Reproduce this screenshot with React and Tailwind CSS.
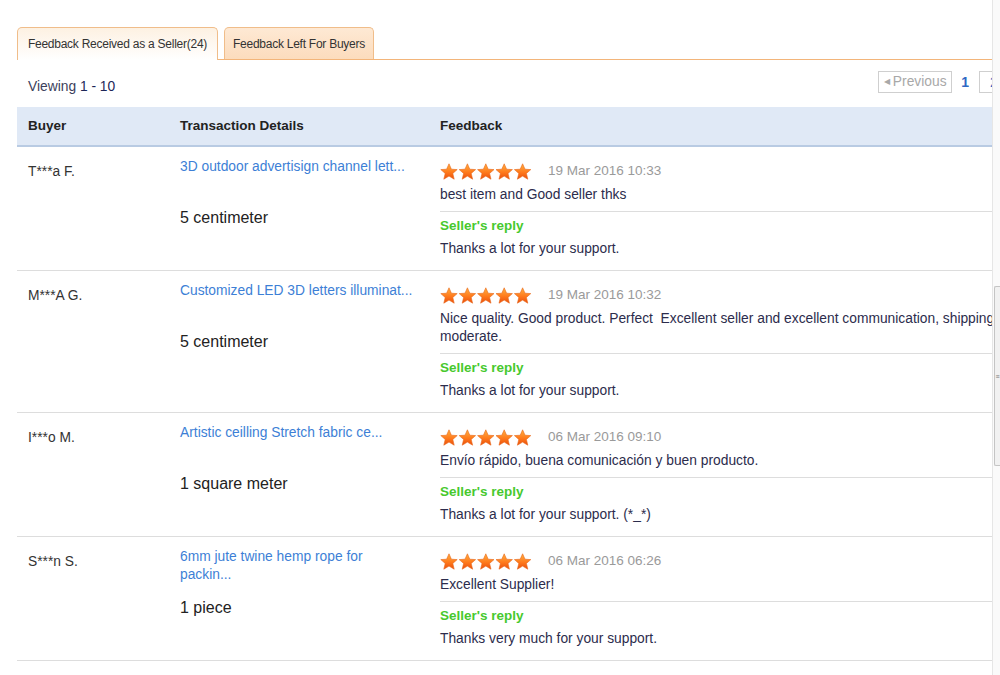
import React from "react";

const rows = [
  {
    buyer: "T***a F.",
    item: ["3D outdoor advertisign channel lett..."],
    qty: "5 centimeter",
    date: "19 Mar 2016 10:33",
    text: ["best item and Good seller thks"],
    reply: "Thanks a lot for your support.",
  },
  {
    buyer: "M***A G.",
    item: ["Customized LED 3D letters illuminat..."],
    qty: "5 centimeter",
    date: "19 Mar 2016 10:32",
    text: [
      "Nice quality. Good product. Perfect\u00a0 Excellent seller and excellent communication, shipping",
      "moderate.",
    ],
    reply: "Thanks a lot for your support.",
  },
  {
    buyer: "I***o M.",
    item: ["Artistic ceilling Stretch fabric ce..."],
    qty: "1 square meter",
    date: "06 Mar 2016 09:10",
    text: ["Envío rápido, buena comunicación y buen producto."],
    reply: "Thanks a lot for your support. (*_*)",
  },
  {
    buyer: "S***n S.",
    item: ["6mm jute twine hemp rope for", "packin..."],
    qty: "1 piece",
    date: "06 Mar 2016 06:26",
    text: ["Excellent Supplier!"],
    reply: "Thanks very much for your support.",
  },
];

function Star({ x }) {
  return (
    <polygon
      transform={`translate(${x},0)`}
      points="9,0.8 11.4,6.2 17.2,6.6 12.8,10.4 14.2,16.2 9,13.1 3.8,16.2 5.2,10.4 0.8,6.6 6.6,6.2"
      fill="url(#starGrad)"
      stroke="#e8661a"
      strokeWidth="0.6"
      strokeLinejoin="round"
    />
  );
}

function Stars() {
  return (
    <svg width="92" height="17" viewBox="0 0 92 17" className="block">
      <defs>
        <linearGradient id="starGrad" x1="0" y1="0" x2="0" y2="1">
          <stop offset="0" stopColor="#ffb040" />
          <stop offset="0.55" stopColor="#ff7a1c" />
          <stop offset="1" stopColor="#ea4f0c" />
        </linearGradient>
      </defs>
      {[0, 18.4, 36.8, 55.2, 73.6].map((x) => (
        <Star key={x} x={x} />
      ))}
    </svg>
  );
}

function FeedbackRow({ row }) {
  return (
    <div className="flex border-b border-[#dddddd]">
      <div className="w-[152px] shrink-0 pl-[11px] pt-[16px] text-[13.8px] leading-[18px] text-[#333]">
        {row.buyer}
      </div>
      <div className="w-[260px] shrink-0 pl-[11px] pt-[11px]">
        <div className="min-h-[36px] text-[13.8px] leading-[18px] text-[#3d7fd6]">
          {row.item.map((l) => (
            <div key={l}>{l}</div>
          ))}
        </div>
        <div className="mt-[14px] text-[16px] leading-[20px] text-[#222]">{row.qty}</div>
      </div>
      <div className="flex-1 pl-[11px] pt-[14px] pb-[12px]">
        <div className="flex h-[20px] items-center">
          <Stars />
          <span className="ml-[16px] text-[13.5px] text-[#9a9a9a]">{row.date}</span>
        </div>
        <div className="mt-[5px] border-b border-[#dddddd] pb-[7px] text-[13.8px] leading-[18px] text-[#2c2c4c]">
          {row.text.map((l) => (
            <div key={l} className="whitespace-nowrap">
              {l}
            </div>
          ))}
        </div>
        <div className="pt-[5px] text-[13.5px] font-bold leading-[18px] text-[#47c92e]">Seller's reply</div>
        <div className="mt-[5px] text-[13.8px] leading-[18px] text-[#2c2c4c]">{row.reply}</div>
      </div>
    </div>
  );
}

export default function App() {
  return (
    <div
      className="flex h-[675px] w-[1000px] overflow-hidden bg-white"
      style={{ fontFamily: '"Liberation Sans", Arial, sans-serif' }}
    >
      <div className="w-[993px] shrink-0 overflow-hidden border-r border-[#e6e6e6] pl-[17px]">
        <div className="w-[1000px]">
          {/* tabs */}
          <div className="flex items-end gap-[6px] border-b border-[#f3b57a] pt-[27px]">
            <div className="-mb-px flex h-[33px] w-[201px] items-center justify-center rounded-t-[5px] border border-b-0 border-[#f0bd8a] bg-gradient-to-b from-[#fdf1e2] to-white text-[12px] tracking-[-0.25px] text-[#333]">
              Feedback Received as a Seller(24)
            </div>
            <div className="flex h-[32px] w-[150px] items-center justify-center rounded-t-[5px] border border-b-0 border-[#f0bd8a] bg-gradient-to-b from-[#fee9d4] to-[#fcdcbd] text-[12px] tracking-[-0.25px] text-[#333]">
              Feedback Left For Buyers
            </div>
          </div>

          {/* viewing + pager */}
          <div className="flex h-[47px] items-start justify-between pr-[8px]">
            <div className="pt-[18px] pl-[11px] text-[13.8px] leading-[18px] text-[#3c3f5c]">
              Viewing <span className="text-[#1d2657]">1 - 10</span>
            </div>
            <div className="flex items-center pt-[11px]">
              <div className="flex h-[22px] w-[74px] items-center justify-center gap-[3px] border border-[#cfcfcf] text-[13.8px] text-[#a8a8a8]">
                <span className="text-[8px]">◀</span>Previous
              </div>
              <span className="ml-[9px] mr-[10px] text-[14px] font-bold text-[#2f68c4]">1</span>
              <div className="flex h-[22px] w-[30px] items-center justify-center border border-[#cfcfcf] text-[14px] text-[#2f68c4]">
                2
              </div>
            </div>
          </div>

          {/* header */}
          <div className="flex h-[40px] items-center border-b-2 border-[#b9cbe3] bg-[#e0e9f6] text-[13.5px] font-bold text-[#222]">
            <div className="w-[152px] pl-[11px]">Buyer</div>
            <div className="w-[260px] pl-[11px]">Transaction Details</div>
            <div className="pl-[11px]">Feedback</div>
          </div>

          {rows.map((r) => (
            <FeedbackRow key={r.buyer} row={r} />
          ))}
        </div>
      </div>

      {/* scrollbar */}
      <div className="flex-1 bg-[#fafafa]">
        <div className="mt-[286px] ml-[1px] flex h-[180px] items-center justify-center rounded-l-[2px] border border-r-0 border-[#c4c4c4] bg-[#f1f1f1] text-[7px] leading-none text-[#777]">
          ≡
        </div>
      </div>
    </div>
  );
}
